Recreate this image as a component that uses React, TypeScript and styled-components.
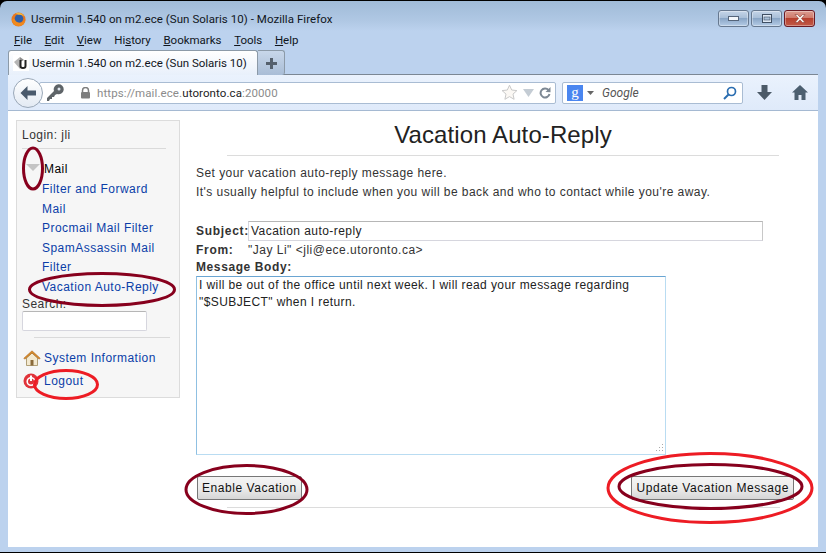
import styled, { createGlobalStyle } from "styled-components";

const GlobalStyle = createGlobalStyle`
  html, body {
    margin: 0;
    padding: 0;
    background: #000;
  }
  * {
    box-sizing: border-box;
  }
`;

const Screen = styled.div`
  position: relative;
  width: 826px;
  height: 553px;
  overflow: hidden;
`;

const Frame = styled.div`
  width: 826px;
  height: 551px;
  margin-top: 1px;
  display: flex;
  flex-direction: column;
  border-radius: 7px 7px 0 0;
  background: linear-gradient(#a0bbd8 0, #b0c8e4 20px, #bcd2ee 30px, #bcd2ee 100%);
  padding: 0 8px 5px;
  font-family: Roboto, "Noto Sans", sans-serif;
`;

const TitleBar = styled.div`
  height: 26px;
  margin-top: 5px;
  display: flex;
  align-items: center;
  gap: 5px;
  padding-left: 3px;
  font-size: 11.5px;
  letter-spacing: 0.05px;
  color: #10151c;
`;

const TitleText = styled.span`
  flex: 1;
`;

const WinButtons = styled.div`
  display: flex;
  gap: 2px;
  margin: -2px 3px 0 0;
`;

const WinButton = styled.div<{ $close?: boolean }>`
  width: 31px;
  height: 17px;
  display: flex;
  align-items: center;
  justify-content: center;
  border-radius: 3px;
  border: 1px solid ${(p) => (p.$close ? "#6a1a24" : "#66788f")};
  background: ${(p) =>
    p.$close
      ? "linear-gradient(#dc9c90 0, #cf7b6c 45%, #b7402e 50%, #c25a48 100%)"
      : "linear-gradient(#c5d5e8 0, #a9bfd8 45%, #8aa6c6 50%, #b4cbe6 100%)"};
  box-shadow: inset 0 0 0 1px rgba(255, 255, 255, 0.35);
`;

const MenuBar = styled.div`
  height: 18px;
  display: flex;
  gap: 12.6px;
  padding-left: 6px;
  font-size: 11.5px;
  line-height: 17px;
  color: #10151c;
`;

const TabStrip = styled.div`
  height: 25px;
  display: flex;
  align-items: flex-end;
  box-shadow: inset 0 -1px 0 #7b8794;
`;

const Tab = styled.div`
  width: 250px;
  height: 25px;
  display: flex;
  align-items: center;
  gap: 3px;
  padding: 0 4px;
  font-size: 11.5px;
  white-space: nowrap;
  color: #10151c;
  background: linear-gradient(#ffffff, #e8f0fb);
  border: 1px solid #8c9aa8;
  border-bottom: none;
  border-radius: 3px 3px 0 0;
  svg {
    flex-shrink: 0;
  }
`;

const NewTab = styled.div`
  width: 27px;
  height: 25px;
  display: flex;
  align-items: center;
  justify-content: center;
  background: linear-gradient(#c8d7ea, #a9bdd6);
  border: 1px solid #8c9aa8;
  border-bottom: none;
  border-left: none;
  border-radius: 0 3px 3px 0;
`;

const NavBar = styled.div`
  height: 36px;
  display: flex;
  align-items: center;
  background: linear-gradient(#eaf2fd, #dfeafa);
  border-bottom: 1px solid #a5b9d2;
  padding-left: 5px;
`;

const BackButton = styled.div`
  width: 30px;
  height: 30px;
  margin-right: -4px;
  z-index: 1;
  display: flex;
  align-items: center;
  justify-content: center;
  border-radius: 50%;
  border: 1px solid #9aa8b8;
  background: linear-gradient(#ffffff, #e3eaf3);
`;

const UrlBar = styled.div`
  width: 517px;
  height: 22px;
  display: flex;
  align-items: center;
  background: #fff;
  border: 1px solid #a9bcd3;
  border-radius: 2px;
  padding: 0 4px 0 5px;
  font-size: 11.5px;
  color: #8b8b8b;
  letter-spacing: 0.1px;
`;

const KeyBox = styled.div`
  width: 35px;
  display: flex;
  padding-left: 1px;
`;

const UrlText = styled.span`
  flex: 1;
  margin-left: 6px;
  b {
    font-weight: 400;
    color: #222;
  }
`;

const UrlIcons = styled.div`
  display: flex;
  align-items: center;
  gap: 5px;
`;

const SearchBar = styled.div`
  width: 181px;
  height: 22px;
  margin-left: 6px;
  display: flex;
  align-items: center;
  gap: 4px;
  background: #fff;
  border: 1px solid #a9bcd3;
  border-radius: 2px;
  padding: 0 5px 0 4px;
  font-size: 12px;
  font-style: italic;
  color: #555;
`;

const SearchLabel = styled.span`
  flex: 1;
  margin-left: 4px;
`;

const GoogleBadge = styled.div`
  width: 16px;
  height: 16px;
  display: flex;
  align-items: center;
  justify-content: center;
  background: #4a86f0;
  color: #fff;
  font: 400 15px "Liberation Serif", serif;
`;

const ToolIcon = styled.div<{ $gap: number }>`
  margin-left: ${(p) => p.$gap}px;
  display: flex;
`;

const Content = styled.div`
  flex: 1;
  display: flex;
  align-items: flex-start;
  background: #fff;
  padding: 9px 8px 0;
  font-family: "Liberation Sans", Arial, sans-serif;
  font-size: 12px;
  letter-spacing: 0.45px;
  color: #333;
`;

const Sidebar = styled.aside`
  width: 164px;
  height: 278px;
  flex-shrink: 0;
  background: #f6f6f6;
  border: 1px solid #dcdcdc;
  padding: 7px 5px;
  letter-spacing: 0.47px;
`;

const Login = styled.div`
  height: 15px;
  line-height: 15px;
`;

const Rule = styled.hr<{ $top: number; $indent: number; $right: number }>`
  border: none;
  height: 1px;
  background: #dadada;
  margin: ${(p) => p.$top}px ${(p) => p.$right}px 0 ${(p) => p.$indent}px;
`;

const MailRow = styled.div`
  height: 19px;
  margin-top: 10px;
  display: flex;
  align-items: center;
  gap: 4px;
  padding-left: 4px;
  color: #000;
`;

const Triangle = styled.div`
  width: 0;
  height: 0;
  margin-top: -3px;
  border-left: 7px solid transparent;
  border-right: 7px solid transparent;
  border-top: 7px solid #c4c4c4;
`;

const SideLinks = styled.div`
  padding-left: 20px;
  line-height: 19.5px;
  margin-top: 2px;
`;

const SideLink = styled.a`
  display: block;
  color: #0b3ea8;
`;

const SearchTitle = styled.div`
  line-height: 14px;
`;

const SideSearch = styled.div`
  width: 125px;
  height: 20px;
  background: #fff;
  border: 1px solid #d6d6de;
  border-top-color: #b6b6b6;
  border-radius: 2px;
`;

const IconLink = styled.a<{ $top: number }>`
  display: flex;
  align-items: center;
  gap: 3px;
  height: 16px;
  padding-left: 1px;
  margin-top: ${(p) => p.$top}px;
  color: #0b3ea8;
`;

const IconBox = styled.span`
  width: 18px;
  display: flex;
`;

const Main = styled.main`
  width: 600px;
  margin-left: 16px;
  display: flex;
  flex-direction: column;
`;

const PageTitle = styled.h1`
  margin: 2px 0 0;
  height: 26px;
  line-height: 26px;
  font-size: 24px;
  font-weight: 400;
  letter-spacing: 0.1px;
  text-align: center;
  color: #222;
  transform: translateX(7px);
`;

const PageRule = styled.hr`
  border: none;
  height: 1px;
  width: 552px;
  margin: 7px 0 0 31px;
  flex-shrink: 0;
  background: #dcdcdc;
`;

const Intro = styled.p`
  margin: 8px 0 0;
  line-height: 19px;
`;

const Form = styled.div`
  margin-top: 19px;
`;

const SubjectRow = styled.div`
  display: flex;
  align-items: center;
  height: 20px;
`;

const FieldLabel = styled.label`
  width: 52px;
  font-weight: 700;
  letter-spacing: 0.7px;
`;

const SubjectInput = styled.div`
  width: 515px;
  height: 20px;
  line-height: 19px;
  padding-left: 2px;
  background: #fff;
  border: 1px solid #d6d6de;
  border-top-color: #b6b6b6;
  border-right-color: #c8c8c8;
  color: #222;
`;

const FromRow = styled.div`
  display: flex;
  align-items: center;
  height: 18px;
  letter-spacing: 0.5px;
`;

const BodyLabel = styled.div`
  font-weight: 700;
  letter-spacing: 0.6px;
  line-height: 17px;
`;

const MessageBody = styled.div`
  position: relative;
  width: 470px;
  height: 179px;
  padding: 0 2px;
  line-height: 17px;
  letter-spacing: 0.41px;
  background: #fff;
  border: 1px solid #b9dcf2;
  border-top-color: #6aa5d2;
  border-left-color: #8fc0e2;
  color: #222;
`;

const Grip = styled.svg`
  position: absolute;
  right: 1px;
  bottom: 1px;
`;

const ButtonRow = styled.div`
  display: flex;
  justify-content: space-between;
  margin-top: 21px;
  padding: 0 1px;
  width: 599px;
`;

const Button = styled.button`
  height: 24px;
  padding: 0 4px;
  font-family: "Liberation Sans", Arial, sans-serif;
  font-size: 12px;
  letter-spacing: 0.55px;
  color: #111;
  border: 1px solid #777;
  border-radius: 2px;
  background: linear-gradient(#f4f4f4, #ececec 50%, #d6d6d6);
`;

const BottomRule = styled.hr`
  border: none;
  height: 1px;
  width: 553px;
  margin: 7px 0 0 31px;
  background: #dcdcdc;
`;

const Annotations = styled.svg`
  position: absolute;
  inset: 0;
  pointer-events: none;
`;

function FirefoxIcon() {
  return (
    <svg width="15" height="15" viewBox="0 0 16 16">
      <circle cx="8" cy="8" r="7.5" fill="#e8781f" />
      <circle cx="8.5" cy="7" r="4.6" fill="#2f5fa8" />
      <path d="M1 9c1 4 4 6 7 6 4 0 7-3 7.400-7-1 2-2.500 3.500-5 3.500C7 11.500 4 10 3.500 7 2.500 7 1.500 8 1 9z" fill="#f08a1e" />
      <path d="M5 1.500c3-1.500 7-.5 9 3-2-1.500-4-2-6-1.500C7 2.500 6 2 5 1.500z" fill="#f6b73c" />
    </svg>
  );
}

function UserminIcon() {
  return (
    <svg width="16" height="16" viewBox="0 0 16 16">
      <rect width="16" height="16" fill="#fff" />
      <path d="M1 7l6-5v12z" fill="#b5b5b5" />
      <path d="M7 2l4 3-4 2z" fill="#8b8b8b" />
      <path d="M6.500 5v6c0 2 1 3 3.500 3s3.500-1 3.500-3V5h-2v6c0 .8-.5 1-1.500 1s-1.500-.2-1.500-1V5z" fill="#222" />
    </svg>
  );
}

function BackArrow() {
  return (
    <svg width="18" height="16" viewBox="0 0 18 16">
      <path d="M8.500 1L1.500 8l7 7V10.500H17v-5H8.500z" fill="#4a5a6c" />
    </svg>
  );
}

function KeyIcon() {
  return (
    <svg width="18" height="18" viewBox="0 0 18 18">
      <path d="M1 17l0-3 7-7a5 5 0 1 1 3 3l-2 1-1 2h-2v2h-2l-1 2z" fill="#5e6468" />
      <circle cx="13" cy="5" r="1.500" fill="#dfe6ee" />
    </svg>
  );
}

function LockIcon() {
  return (
    <svg width="11" height="12" viewBox="0 0 11 12">
      <path d="M2.500 5V3.500a3 3 0 0 1 6 0V5" fill="none" stroke="#7e7e7e" strokeWidth="1.500" />
      <rect x="1" y="5" width="9" height="6.500" rx="1" fill="#7e7e7e" />
    </svg>
  );
}

function StarIcon() {
  return (
    <svg width="17" height="17" viewBox="0 0 17 17">
      <path d="M8.500 1.200l2.200 4.800 5.200.6-3.900 3.500 1.100 5.200-4.600-2.700-4.600 2.700 1.100-5.200L1.100 6.600l5.200-.6z" fill="#fbf8f4" stroke="#c9c9c9" />
    </svg>
  );
}

function ReloadIcon() {
  return (
    <svg width="12" height="12" viewBox="0 0 12 12">
      <path d="M9.500 3A4.500 4.500 0 1 0 10.500 7" fill="none" stroke="#7d8894" strokeWidth="2" />
      <path d="M6.500 5L11.500 5.200 11.500 0z" fill="#7d8894" />
    </svg>
  );
}

function MagnifierIcon() {
  return (
    <svg width="14" height="14" viewBox="0 0 14 14">
      <circle cx="8.500" cy="5.500" r="4" fill="none" stroke="#2a6db0" strokeWidth="1.700" />
      <path d="M5.500 8.500L1 13" stroke="#2a6db0" strokeWidth="2" />
    </svg>
  );
}

function DownloadIcon() {
  return (
    <svg width="15" height="15" viewBox="0 0 15 15">
      <path d="M4.500 0h6v7H15l-7.500 8L0 7h4.500z" fill="#4c5a68" />
    </svg>
  );
}

function HomeIcon() {
  return (
    <svg width="16" height="15" viewBox="0 0 16 15">
      <path d="M8 0L0 7.500h2.500V15h4v-5h3v5h4V7.500H16z" fill="#4c5f70" />
    </svg>
  );
}

function HouseIcon() {
  return (
    <svg width="18" height="16" viewBox="0 0 18 16">
      <path d="M3.500 8v7.500h11V8L9 3z" fill="#f3e9d0" stroke="#a08a5c" strokeWidth="0.8" />
      <rect x="7.500" y="10" width="3" height="5.500" fill="#8a6a3a" />
      <path d="M9 .8L.8 8.200l1 1L9 3l7.200 6.200 1-1z" fill="#d98a2a" stroke="#a5641a" strokeWidth="0.5" />
    </svg>
  );
}

function PowerIcon() {
  return (
    <svg width="16" height="16" viewBox="0 0 16 16">
      <circle cx="8" cy="8" r="7.500" fill="#e0333a" />
      <circle cx="8" cy="8.500" r="3.800" fill="none" stroke="#fff" strokeWidth="1.600" />
      <rect x="7" y="2.500" width="2" height="5.500" fill="#fff" />
    </svg>
  );
}

export default function App() {
  return (
    <Screen>
      <GlobalStyle />
      <Frame>
        <TitleBar>
          <FirefoxIcon />
          <TitleText>Usermin 1.540 on m2.ece (Sun Solaris 10) - Mozilla Firefox</TitleText>
          <WinButtons>
            <WinButton>
              <svg width="11" height="5" viewBox="0 0 11 5">
                <rect x="0.500" y="0.500" width="10" height="4" fill="#f2f6fb" stroke="#55657a" />
              </svg>
            </WinButton>
            <WinButton>
              <svg width="10" height="9" viewBox="0 0 10 9">
                <rect x="0.500" y="0.500" width="9" height="8" fill="#dfe9f5" stroke="#3f4f63" />
                <rect x="2" y="3" width="6" height="3" fill="#a9bfd8" stroke="#3f4f63" strokeWidth="0.6" />
              </svg>
            </WinButton>
            <WinButton $close>
              <svg width="12" height="9" viewBox="0 0 12 9">
                <path d="M1 .5h2.500L6 3 8.500.5H11L7.500 4.500 11 8.500H8.500L6 6 3.500 8.500H1L4.500 4.500z" fill="#f6f1ee" stroke="#7a2a22" strokeWidth="0.5" />
              </svg>
            </WinButton>
          </WinButtons>
        </TitleBar>
        <MenuBar>
          <span><u>F</u>ile</span>
          <span><u>E</u>dit</span>
          <span><u>V</u>iew</span>
          <span>Hi<u>s</u>tory</span>
          <span><u>B</u>ookmarks</span>
          <span><u>T</u>ools</span>
          <span><u>H</u>elp</span>
        </MenuBar>
        <TabStrip>
          <Tab>
            <UserminIcon />
            Usermin 1.540 on m2.ece (Sun Solaris 10)
          </Tab>
          <NewTab>
            <svg width="11" height="11" viewBox="0 0 11 11">
              <path d="M4 0h3v4h4v3H7v4H4V7H0V4h4z" fill="#55606c" />
            </svg>
          </NewTab>
        </TabStrip>
        <NavBar>
          <BackButton>
            <BackArrow />
          </BackButton>
          <UrlBar>
            <KeyBox>
              <KeyIcon />
            </KeyBox>
            <LockIcon />
            <UrlText>
              https://mail.ece.<b>utoronto.ca</b>:20000
            </UrlText>
            <UrlIcons>
              <StarIcon />
              <svg width="11" height="8" viewBox="0 0 11 8">
                <path d="M0 0h11L5.500 8z" fill="#c4ccd4" />
              </svg>
              <ReloadIcon />
            </UrlIcons>
          </UrlBar>
          <SearchBar>
            <GoogleBadge>g</GoogleBadge>
            <svg width="7" height="4" viewBox="0 0 7 4">
              <path d="M0 0h7L3.500 4z" fill="#666" />
            </svg>
            <SearchLabel>Google</SearchLabel>
            <MagnifierIcon />
          </SearchBar>
          <ToolIcon $gap={14}>
            <DownloadIcon />
          </ToolIcon>
          <ToolIcon $gap={20}>
            <HomeIcon />
          </ToolIcon>
        </NavBar>
        <Content>
          <Sidebar>
            <Login>Login: jli</Login>
            <Rule $top={5} $indent={0} $right={8} />
            <MailRow>
              <Triangle />
              Mail
            </MailRow>
            <SideLinks>
              <SideLink>Filter and Forward Mail</SideLink>
              <SideLink>Procmail Mail Filter</SideLink>
              <SideLink>SpamAssassin Mail Filter</SideLink>
              <SideLink>Vacation Auto-Reply</SideLink>
            </SideLinks>
            <SearchTitle>Search:</SearchTitle>
            <SideSearch />
            <Rule $top={6} $indent={12} $right={4} />
            <IconLink $top={12}>
              <IconBox>
                <HouseIcon />
              </IconBox>
              System Information
            </IconLink>
            <IconLink $top={7}>
              <IconBox>
                <PowerIcon />
              </IconBox>
              Logout
            </IconLink>
          </Sidebar>
          <Main>
            <PageTitle>Vacation Auto-Reply</PageTitle>
            <PageRule />
            <Intro>
              Set your vacation auto-reply message here.
              <br />
              It's usually helpful to include when you will be back and who to contact while you're away.
            </Intro>
            <Form>
              <SubjectRow>
                <FieldLabel>Subject:</FieldLabel>
                <SubjectInput>Vacation auto-reply</SubjectInput>
              </SubjectRow>
              <FromRow>
                <FieldLabel>From:</FieldLabel>
                {'"Jay Li" <jli@ece.utoronto.ca>'}
              </FromRow>
              <BodyLabel>Message Body:</BodyLabel>
              <MessageBody>
                I will be out of the office until next week. I will read your message regarding
                <br />
                "$SUBJECT" when I return.
                <Grip width="10" height="10" viewBox="0 0 10 10">
                  <path d="M8 1h1v1H8zM5 4h1v1H5zM8 4h1v1H8zM2 7h1v1H2zM5 7h1v1H5zM8 7h1v1H8z" fill="#aaa" />
                </Grip>
              </MessageBody>
              <ButtonRow>
                <Button>Enable Vacation</Button>
                <Button>Update Vacation Message</Button>
              </ButtonRow>
              <BottomRule />
            </Form>
          </Main>
        </Content>
      </Frame>
      <Annotations width="826" height="553" viewBox="0 0 826 553" fill="none" strokeWidth="3">
        <ellipse cx="33" cy="168.500" rx="9.500" ry="20.500" stroke="#87001d" />
        <ellipse cx="102" cy="289.500" rx="72.500" ry="16" stroke="#87001d" />
        <ellipse cx="66" cy="384.500" rx="31.500" ry="14" stroke="#ed1c24" />
        <ellipse cx="246.500" cy="489.500" rx="60.500" ry="24" stroke="#87001d" />
        <ellipse cx="710.500" cy="486.500" rx="91.500" ry="22" stroke="#87001d" />
        <ellipse cx="710" cy="488" rx="102" ry="34.500" stroke="#ed1c24" />
      </Annotations>
    </Screen>
  );
}
